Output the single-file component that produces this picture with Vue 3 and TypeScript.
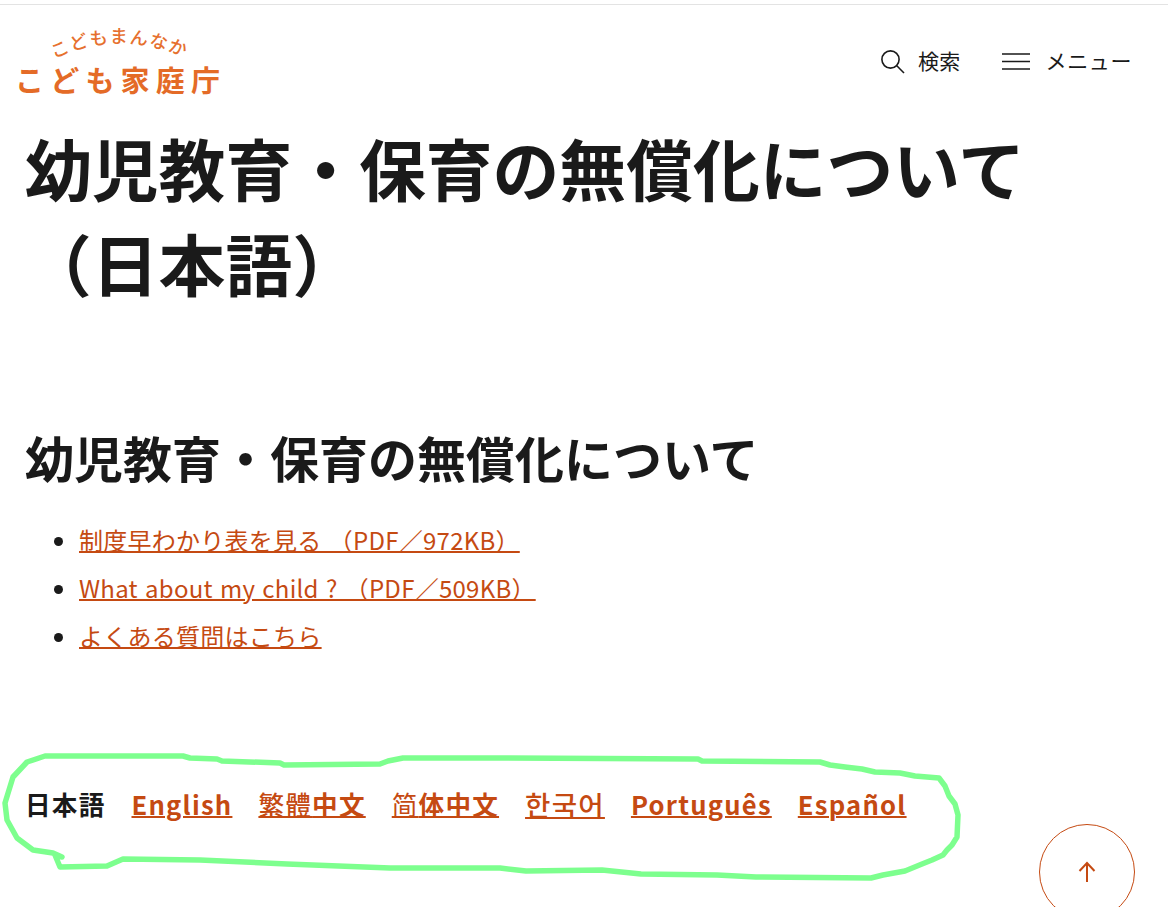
<script setup lang="ts">
interface Lang {
  soft: string
  softClass: string
  rest: string
}
const links = [
  '制度早わかり表を見る （PDF／972KB）',
  'What about my child ? （PDF／509KB）',
  'よくある質問はこちら',
]
const langs: Lang[] = [
  { soft: '', softClass: '', rest: 'English' },
  { soft: '繁體', softClass: 'medium', rest: '中文' },
  { soft: '简', softClass: 'thin', rest: '体中文' },
  { soft: '한국어', softClass: 'hangul', rest: '' },
  { soft: '', softClass: '', rest: 'Português' },
  { soft: '', softClass: '', rest: 'Español' },
]
const scribble =
  'M45 756 L183 756 L190 758 L217 759 L222 761 L280 763 L284 765 L380 764 L388 761 L403 758 L500 758 L698 759 L702 761 L820 762 L830 765 L845 767 L862 769 L875 772 L900 773 L915 776 L939 778 L945 786 L949 796 L955 804 L958 815 L957 837 L952 845 L947 850 L943 855 L932 860 L922 864 L905 871 L883 875 L871 878 L756 877 L717 875 L641 874 L602 870 L526 871 L500 868 L390 868 L287 864 L200 860 L123 859 L107 866 L60 867 L55 855 L62 857 L53 853 L33 850 L17 838 L7 820 L5 803 L13 777 L27 762 Z'
</script>

<template>
  <div class="page">
    <header class="header">
      <svg class="logo" viewBox="0 0 230 90" width="230" height="90" role="img" aria-label="こども家庭庁">
        <defs>
          <path id="logo-arc" d="M54 49 Q118 17 192 50" />
        </defs>
        <text class="logo-small"><textPath href="#logo-arc">こどもまんなか</textPath></text>
        <text class="logo-main" x="15" y="82">こども家庭庁</text>
      </svg>
      <nav class="tools">
        <span class="tool search">
          <svg width="26" height="26" viewBox="0 0 26 26" fill="none" stroke="#1a1a1a" stroke-width="1.6">
            <circle cx="10.5" cy="10.5" r="8.6" />
            <path d="M16.8 16.8 L24 24" />
          </svg>
          <span class="tool-label">検索</span>
        </span>
        <span class="tool menu">
          <svg width="28" height="18" viewBox="0 0 28 18" fill="none" stroke="#1a1a1a" stroke-width="1.3">
            <path d="M0 1H28M0 8.5H28M0 16H28" />
          </svg>
          <span class="tool-label">メニュー</span>
        </span>
      </nav>
    </header>

    <main class="content">
      <h1 class="title">幼児教育・保育の無償化について<br />（日本語）</h1>
      <h2 class="subtitle">幼児教育・保育の無償化について</h2>
      <ul class="list">
        <li v-for="link in links" :key="link"><a href="#">{{ link }}</a></li>
      </ul>
      <div class="langs">
        <span class="lang current">日本語</span>
        <a v-for="lang in langs" :key="lang.soft + lang.rest" class="lang" href="#"><span v-if="lang.soft" :class="lang.softClass">{{ lang.soft }}</span>{{ lang.rest }}</a>
      </div>
    </main>

    <a class="to-top" href="#" aria-label="ページトップへ">
      <svg width="22" height="22" viewBox="0 0 22 22" fill="none" stroke="#c54a12" stroke-width="2">
        <path d="M11 21V2M3.5 10L11 2L18.5 10" />
      </svg>
    </a>
    <svg class="scribble" width="1168" height="907" viewBox="0 0 1168 907" fill="none">
      <path :d="scribble" stroke="#7dff8e" stroke-width="5.5" stroke-linejoin="round" />
    </svg>
  </div>
</template>

<style>
html, body { margin: 0; background: #fff; }
</style>

<style scoped>
.page {
  position: relative;
  width: 1168px;
  height: 907px;
  overflow: hidden;
  box-sizing: border-box;
  padding-top: 4px;
  background: #fff;
  color: #1a1a1a;
  font-family: "Noto Sans CJK JP", "Noto Sans", sans-serif;
}
.header {
  display: flex;
  justify-content: space-between;
  align-items: flex-start;
  height: 116px;
  box-sizing: border-box;
  padding-right: 36px;
  border-top: 1px solid #e3e3e3;
}
.logo { flex: none; margin-top: 5px; }
.logo-small { font-size: 18px; font-weight: 500; fill: #e6702e; letter-spacing: 1.4px; }
.logo-main { font-size: 29px; font-weight: 700; fill: #e46b27; letter-spacing: 6.2px; }
.tools { display: flex; gap: 41px; margin-top: 44px; font-size: 21px; font-weight: 400; letter-spacing: 0.3px; }
.tool { display: flex; align-items: center; gap: 12px; height: 26px; }
.tool-label { margin-bottom: 4px; }
.menu { gap: 16px; letter-spacing: 0.6px; }
.content { padding: 0 25px; }
.title {
  margin: 0;
  font-size: 66.8px;
  line-height: 95px;
  font-weight: 700;
}
.subtitle {
  margin: 111px 0 0;
  font-size: 49px;
  line-height: 72px;
  font-weight: 700;
}
.list { margin: 23px 0 0; padding: 0 0 0 54px; font-size: 24px; line-height: 48px; letter-spacing: 0.26px; word-spacing: 1.5px; }
.list a { color: #c54a12; text-decoration-thickness: 2px; }
.langs { display: flex; gap: 26px; margin-top: 125px; font-size: 25.6px; line-height: 38px; font-weight: 700; letter-spacing: 1.23px; }
.lang { color: #c54a12; text-decoration-thickness: 2px; }
.current { color: #1a1a1a; }
.thin { font-weight: 400; }
.medium { font-weight: 500; }
.hangul { font-family: "Noto Sans CJK KR", sans-serif; font-size: 27.6px; font-weight: 500; }
.to-top {
  position: absolute;
  left: 1039px;
  top: 824px;
  width: 96px;
  height: 96px;
  box-sizing: border-box;
  border: 1px solid #c54a12;
  border-radius: 50%;
  display: flex;
  align-items: center;
  justify-content: center;
}
.scribble { position: absolute; left: 0; top: 0; pointer-events: none; }
</style>
